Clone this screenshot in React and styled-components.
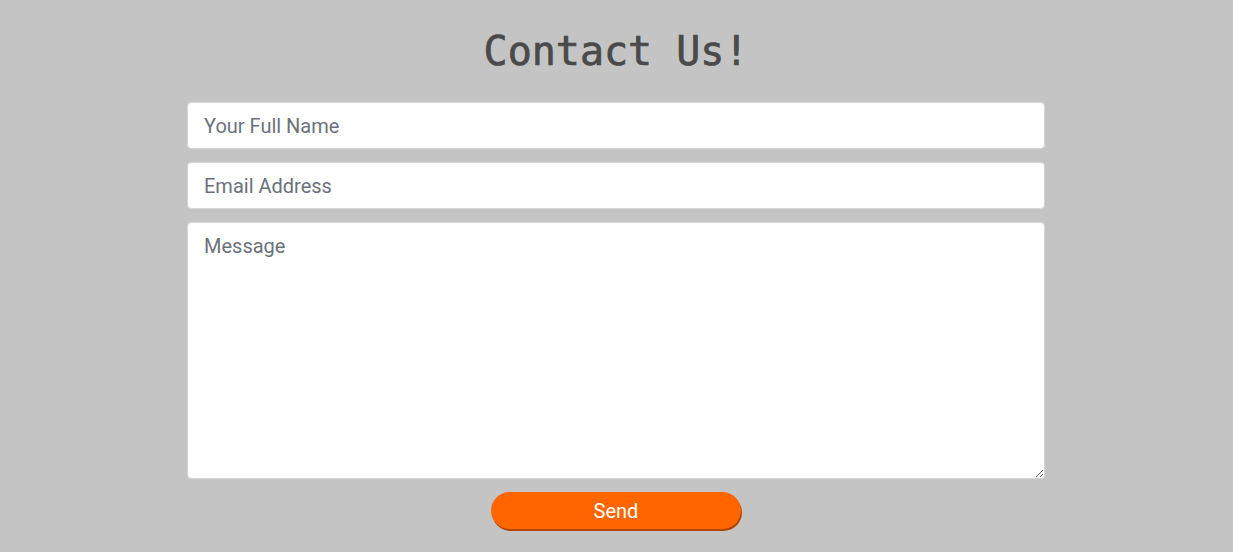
import React from "react";
import styled, { createGlobalStyle } from "styled-components";

const Global = createGlobalStyle`
  html, body { margin: 0; padding: 0; background: #c4c4c4; }
  body { font-family: Roboto, "Liberation Sans", sans-serif; }
  * { box-sizing: border-box; }
`;

const Page = styled.main`
  display: flex;
  flex-direction: column;
  align-items: center;
  padding: 28px 1px 0 0;
  min-height: 552px;
`;

const Title = styled.h1`
  margin: 0 0 27px;
  font-family: "DejaVu Sans Mono", "Liberation Mono", monospace;
  font-weight: 400;
  font-size: 40px;
  line-height: 47px;
  color: #4a4a4a;
  -webkit-text-stroke: 0.7px #4a4a4a;
`;

const Form = styled.form`
  width: 858px;
  display: flex;
  flex-direction: column;
  align-items: center;
  gap: 13px;
`;

const fieldBase = `
  width: 100%;
  border: 1px solid #d6d6d6;
  border-radius: 4px;
  background: #fff;
  font-family: Roboto, "Liberation Sans", sans-serif;
  font-size: 20px;
  color: #333;
  padding: 0 16px;
  outline: none;
  &::placeholder { color: #6b717b; opacity: 1; }
`;

const Input = styled.input`
  ${fieldBase}
  height: 47px;
`;

const TextArea = styled.textarea`
  ${fieldBase}
  height: 257px;
  padding-top: 11px;
  line-height: 24px;
  resize: vertical;
`;

const SendButton = styled.button`
  width: 250px;
  height: 37px;
  border: none;
  border-radius: 19px;
  background: #ff6600;
  color: #fff;
  font-family: Roboto, "Liberation Sans", sans-serif;
  font-size: 20px;
  box-shadow: 1px 2px 0 #b04500;
  cursor: pointer;
  padding: 0;
`;

export default function App() {
  return (
    <>
      <Global />
      <Page>
        <Title>Contact Us!</Title>
        <Form onSubmit={(e) => e.preventDefault()}>
          <Input type="text" placeholder="Your Full Name" />
          <Input type="email" placeholder="Email Address" />
          <TextArea placeholder="Message" />
          <SendButton type="submit">Send</SendButton>
        </Form>
      </Page>
    </>
  );
}
